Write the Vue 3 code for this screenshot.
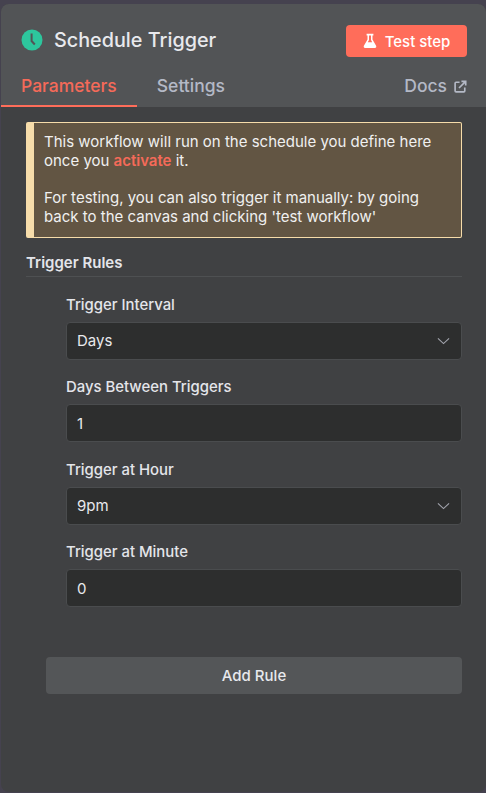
<script setup>
const fields = [
  { label: "Trigger Interval", value: "Days", select: true },
  { label: "Days Between Triggers", value: "1", select: false },
  { label: "Trigger at Hour", value: "9pm", select: true },
  { label: "Trigger at Minute", value: "0", select: false },
];
</script>

<template>
  <div class="page">
    <div class="panel">
      <header class="header">
        <div class="title-row">
          <div class="title">
            <svg class="clock" viewBox="0 0 22 22" aria-hidden="true">
              <circle cx="11" cy="11" r="10.5" fill="#2dc69d" />
              <path d="M10.6 4.6v7.4l3.2 3.5" fill="none" stroke="#525456" stroke-width="2" />
            </svg>
            <span>Schedule Trigger</span>
          </div>
          <button class="test-btn">
            <svg class="flask" viewBox="0 0 14 16" aria-hidden="true">
              <path d="M3.6 0.8h6.8v1.6h-.9v4.2l3.6 6.2c.5.9 0 2.2-1.2 2.2H2.1c-1.2 0-1.7-1.3-1.2-2.2l3.6-6.2V2.4h-.9z" fill="#fff" />
              <path d="M6 2.4h2v4.7l1.2 2.1H4.8L6 7.1z" fill="#ff6d5a" />
            </svg>
            <span>Test step</span>
          </button>
        </div>
        <nav class="tabs">
          <a class="tab active">Parameters</a>
          <a class="tab">Settings</a>
          <a class="tab docs">
            Docs
            <svg class="ext" viewBox="0 0 14 14" aria-hidden="true">
              <path d="M6 2.4H2.2a1 1 0 0 0-1 1v8.4a1 1 0 0 0 1 1h8.4a1 1 0 0 0 1-1V8" fill="none" stroke="#b4b9c6" stroke-width="1.8" />
              <path d="M5.4 8.6 12 2M8 1.4h4.6V6" fill="none" stroke="#b4b9c6" stroke-width="1.8" />
            </svg>
          </a>
        </nav>
      </header>

      <main class="body">
        <div class="callout">
          <p>This workflow will run on the schedule you define here once you <span class="link">activate</span> it.</p>
          <p>For testing, you can also trigger it manually: by going back to the canvas and clicking 'test workflow'</p>
        </div>

        <div class="section-title">Trigger Rules</div>

        <div class="fields">
          <div v-for="field in fields" :key="field.label" class="field">
            <label class="label">{{ field.label }}</label>
            <div class="control">
              <span>{{ field.value }}</span>
              <svg v-if="field.select" class="chevron" viewBox="0 0 14 8" aria-hidden="true">
                <path d="M1 1.2 7 6.8l6-5.6" fill="none" stroke="#a3a5ae" stroke-width="1.2" />
              </svg>
            </div>
          </div>
        </div>

        <button class="add-btn">Add Rule</button>
      </main>
    </div>
  </div>
</template>

<style scoped>
.page {
  height: 793px;
  box-sizing: border-box;
  padding: 4px 0 1px 1px;
  background: #45424f;
  font-family: Inter, "Liberation Sans", sans-serif;
}

.panel {
  height: 100%;
  display: flex;
  flex-direction: column;
  background: #404143;
  border-radius: 8px;
  overflow: hidden;
}

.header {
  height: 103px;
  box-sizing: border-box;
  background: #525456;
  flex-shrink: 0;
}

.title-row {
  display: flex;
  align-items: center;
  justify-content: space-between;
  padding: 21px 19px 0 20px;
}

.title {
  display: flex;
  align-items: center;
  gap: 11px;
  color: #e8e9ed;
  font-size: 19.8px;
  font-weight: 500;
  margin-top: -3px;
}

.clock {
  width: 22px;
  height: 22px;
}

.test-btn {
  display: flex;
  align-items: center;
  justify-content: center;
  gap: 8px;
  width: 121px;
  height: 32px;
  padding: 0;
  border: none;
  border-radius: 4px;
  background: #ff6d5a;
  color: #fff;
  font-family: inherit;
  font-size: 15px;
  font-weight: 500;
}

.flask {
  width: 14px;
  height: 16px;
}

.tabs {
  display: flex;
  align-items: flex-start;
  margin-top: 19px;
  height: 31px;
}

.tab {
  box-sizing: border-box;
  height: 31px;
  padding: 0 20px;
  color: #b4b9c6;
  font-size: 17.5px;
  font-weight: 500;
  line-height: 20px;
}

.tab.active {
  color: #f56a59;
  border-bottom: 2px solid #ff6d5a;
}

.docs {
  display: flex;
  align-items: flex-start;
  gap: 7px;
  margin-left: auto;
  padding: 0 19px 0 0;
}

.ext {
  width: 13px;
  height: 13px;
  margin-top: 4px;
}

.body {
  padding: 15px 24px 0 25px;
}

.callout {
  box-sizing: border-box;
  height: 116px;
  padding: 9px 16px 0 10px;
  background: #625543;
  border: 1px solid #f6dcaa;
  border-left: 8px solid #f6dcaa;
  border-radius: 2px;
  color: #f0f0f0;
  font-size: 15px;
  line-height: 19px;
}

.callout p {
  margin: 0 0 18px;
}

.link {
  color: #f56a59;
  font-weight: 600;
}

.section-title {
  margin-top: 16px;
  padding-bottom: 5px;
  border-bottom: 1px solid #4e5052;
  color: #e4e5ea;
  font-size: 15px;
  font-weight: 600;
  line-height: 17px;
}

.fields {
  display: flex;
  flex-direction: column;
  gap: 18.5px;
  padding: 18.75px 0 0 40px;
}

.label {
  display: block;
  margin-bottom: 8px;
  color: #e4e5ea;
  font-size: 14.9px;
  font-weight: 500;
  line-height: 18px;
}

.control {
  box-sizing: border-box;
  height: 38px;
  display: flex;
  align-items: center;
  justify-content: space-between;
  padding: 0 11px 0 10px;
  background: #2d2e2e;
  border: 1px solid #4a4c4e;
  border-radius: 4px;
  color: #e8e9ed;
  font-size: 15px;
}

.chevron {
  width: 13px;
  height: 8px;
}

.add-btn {
  display: block;
  width: 416px;
  height: 37px;
  margin: 49.75px 0 0 20px;
  padding: 0;
  border: none;
  border-radius: 4px;
  background: #545658;
  color: #e8e9ed;
  font-family: inherit;
  font-size: 15px;
  font-weight: 500;
}
</style>

<style>
html,
body {
  background: #45424f;
}
</style>
